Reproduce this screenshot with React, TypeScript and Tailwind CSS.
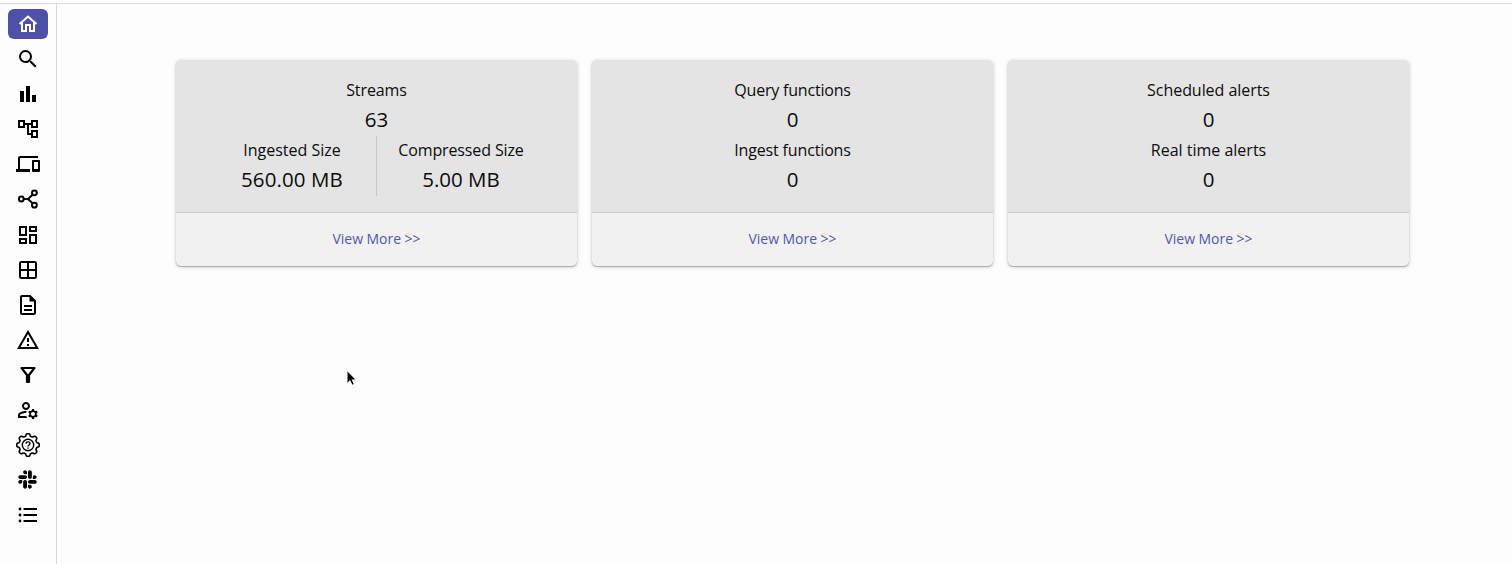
import type { ReactNode } from "react";
import {
  MdSearch,
  MdOutlineAccountTree,
  MdOutlineDevices,
  MdOutlineDashboard,
  MdOutlineWarningAmber,
  MdOutlineManageAccounts,
} from "react-icons/md";
import { FaSlack } from "react-icons/fa";

function Glyph({ children }: { children: ReactNode }) {
  return (
    <svg width="24" height="24" viewBox="0 0 24 24" fill="none" stroke="currentColor" strokeWidth="2">
      {children}
    </svg>
  );
}

function gearPath(): string {
  const points: string[] = [];
  for (let i = 0; i <= 160; i++) {
    const a = (i / 160) * Math.PI * 2;
    const wave = Math.tanh(2.2 * Math.cos(8 * a)) / Math.tanh(2.2);
    const r = 10.15 + 1.15 * wave;
    points.push(`${(12 + r * Math.sin(a)).toFixed(2)} ${(12 - r * Math.cos(a)).toFixed(2)}`);
  }
  return `M${points.join("L")}Z`;
}

const icons: ReactNode[] = [
  <MdSearch size={24} />,
  <Glyph>
    <path d="M4 9h4v11H4zM10 4h4v16h-4zM16 13h4v7h-4z" fill="currentColor" stroke="none" />
  </Glyph>,
  <MdOutlineAccountTree size={24} />,
  <MdOutlineDevices size={24} />,
  <Glyph>
    <circle cx="5.3" cy="12" r="2.4" />
    <circle cx="18.4" cy="5.8" r="2.4" />
    <circle cx="18.4" cy="18.2" r="2.4" />
    <path d="M7.5 12H12L16.8 7.6M12 12l4.8 4.4" />
  </Glyph>,
  <MdOutlineDashboard size={24} />,
  <Glyph>
    <rect x="4" y="4" width="16" height="16" rx="1.2" />
    <path d="M12 4v16M4 12h16" />
  </Glyph>,
  <Glyph>
    <path d="M14 3H6a1 1 0 0 0-1 1v16a1 1 0 0 0 1 1h12a1 1 0 0 0 1-1V8zM8 13h8M8 17h8" />
    <path d="M13.5 3v5.5H19z" fill="currentColor" stroke="none" />
  </Glyph>,
  <MdOutlineWarningAmber size={24} />,
  <Glyph>
    <path d="M5.5 5h13L13 12v7h-2v-7z" strokeLinejoin="round" strokeWidth="2.2" />
  </Glyph>,
  <MdOutlineManageAccounts size={24} />,
  <Glyph>
    <path d={gearPath()} strokeWidth="1.6" />
    <circle cx="12" cy="12" r="5.7" strokeWidth="1.4" />
    <path d="M10.1 10.8c0-2.6 3.9-2.5 3.9-.2 0 1.5-2 1.4-2 3M12 14.5v1.3" strokeWidth="1.4" />
  </Glyph>,
  <FaSlack size={21} className="mr-px mb-[2px]" />,
  <Glyph>
    <path d="M7.5 6H21M7.5 12H21M7.5 18H21" strokeWidth="2" />
    <path d="M4 6h.01M4 12h.01M4 18h.01" strokeWidth="2.8" strokeLinecap="round" />
  </Glyph>,
];

function Label({ children, className }: { children: string; className: string }) {
  return <div className={`flex h-[30px] items-center justify-center whitespace-nowrap text-[16px] ${className}`}>{children}</div>;
}

function Value({ children, className = "" }: { children: string; className?: string }) {
  return <div className={`flex h-[30px] items-center justify-center pb-[2px] whitespace-nowrap text-[20.5px] ${className}`}>{children}</div>;
}

function Card({ children }: { children: ReactNode }) {
  return (
    <section className="flex h-[206px] w-[401px] flex-col overflow-hidden rounded-[5px] bg-[#f1f1f1] shadow-[0_1px_4px_rgba(0,0,0,0.2),0_1px_1px_rgba(0,0,0,0.25)]">
      <div className="h-[153px] border-b border-[#cecece] bg-[#e4e4e4] pt-[15px]">{children}</div>
      <div className="flex flex-1 items-center justify-center pb-[3px] text-[14px] tracking-[-0.05px] text-[#5357b0]">
        <a>View More &gt;&gt;</a>
      </div>
    </section>
  );
}

export default function App() {
  return (
    <div className="flex h-[564px] flex-col overflow-hidden bg-[#fdfdfd] pt-[3px] font-['Open_Sans',sans-serif] text-[#0c0c0c]">
      <div className="flex flex-1 border-t border-[#dedede]">
        <nav className="flex w-[57px] flex-col items-center border-r border-[#dadada] pt-[5px] text-black">
          <div className="mb-[2.5px] flex h-[30px] w-10 items-center justify-center rounded-[6px] bg-[#4e50a8] text-white">
            <Glyph>
              <path d="M3.6 12.1L12 4.5l8.4 7.6M6 10.5V19h4v-6h4v6h4v-8.5" strokeWidth="2" />
            </Glyph>
          </div>
          {icons.map((icon, i) => (
            <div key={i} className="flex h-[35.1px] w-10 shrink-0 items-center justify-center">
              {icon}
            </div>
          ))}
        </nav>
        <main className="flex flex-1 items-start gap-[15px] pt-14 pl-[119px]">
          <Card>
            <Label className="tracking-[-0.1px]">Streams</Label>
            <Value>63</Value>
            <div className="flex justify-center">
              <div className="w-[168px]">
                <Label className="tracking-[0px]">Ingested Size</Label>
                <Value className="tracking-[0.1px]">560.00 MB</Value>
              </div>
              <div className="mt-px -mb-px w-px bg-[#c8c8c8]" />
              <div className="w-[168px]">
                <Label className="tracking-[-0.13px]">Compressed Size</Label>
                <Value>5.00 MB</Value>
              </div>
            </div>
          </Card>
          <Card>
            <Label className="tracking-[-0.2px]">Query functions</Label>
            <Value>0</Value>
            <Label className="tracking-[-0.15px]">Ingest functions</Label>
            <Value>0</Value>
          </Card>
          <Card>
            <Label className="tracking-[-0.05px]">Scheduled alerts</Label>
            <Value>0</Value>
            <Label className="tracking-[0px]">Real time alerts</Label>
            <Value>0</Value>
          </Card>
        </main>
      </div>
      <svg className="absolute top-[369px] left-[345px]" width="12" height="19" viewBox="0 0 12 19">
        <path d="M2 1.5v13l3-2.8 2 4.6 2.3-1-2-4.4h4z" fill="#000" stroke="#fff" strokeWidth="1" />
      </svg>
    </div>
  );
}
